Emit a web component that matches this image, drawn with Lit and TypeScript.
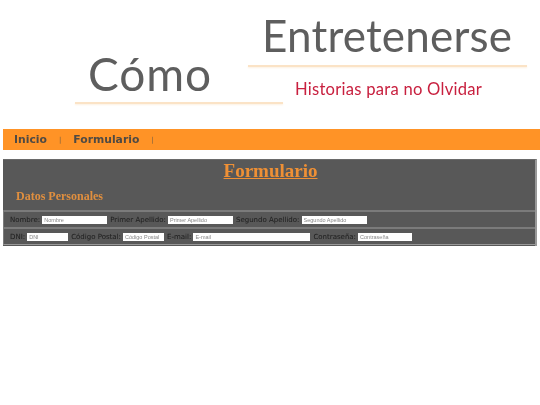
import { LitElement, html, css } from "lit";
import { customElement } from "lit/decorators.js";

@customElement("app-root")
export class AppRoot extends LitElement {
  static styles = css`
    :host { display: block; width: 540px; height: 405px; background: #fff; overflow: hidden; font-family: "DejaVu Sans", sans-serif; filter: blur(.3px); }
    .head { display: grid; grid-template-columns: 75px 173px 35px 244px; height: 129px; box-sizing: border-box; padding-top: 13px; }
    .brand { font-family: "Lato", "Open Sans", sans-serif; color: #5e5e5e; font-weight: 400; line-height: 1; }
    .ent { grid-column: 3 / 5; grid-row: 1; }
    .ent .brand { font-size: 44px; height: 50px; padding-left: 14px; letter-spacing: .2px; }
    .rule { height: 2px; background: #fbe3c6; box-shadow: 0 1px 2px #fdf0e0; }
    .ent .rule { margin-top: 2px; }
    .sub { font-family: "Lato", "Open Sans", sans-serif; color: #c8203f; font-size: 16.6px; letter-spacing: .25px; padding: 12px 0 0 47px; line-height: 20px; }
    .como { grid-column: 2 / 4; grid-row: 1; padding-top: 41px; }
    .como .brand { font-size: 46px; height: 48px; padding-left: 13px; letter-spacing: .9px; margin-top: -3px; padding-bottom: 3px; }
    nav { margin-left: 3px; height: 21px; background: #ff9326; display: flex; align-items: center; padding-left: 11px; color: #4f4a44; font-weight: bold; font-size: 10.8px; }
    nav i { font-style: normal; font-weight: normal; font-size: 7px; margin: 0 12px; color: #7a6040; }
    main { margin: 9px 3px 0; height: 87px; box-sizing: border-box; background: #585858; border-top: 1px solid #6a6a6a; border-right: 2px solid #999; display: flex; flex-direction: column; }
    h1 { margin: 0; padding-left: 3px; font: bold 19px/22px "Liberation Serif", serif; color: #ef9035; text-decoration: underline; text-align: center; height: 25px; }
    h2 { margin: 0; font: bold 12px/14px "Liberation Serif", serif; color: #e08f3f; padding: 4px 0 0 13px; height: 21px; box-sizing: content-box; }
    .row { display: flex; align-items: center; height: 15px; border-top: 2px solid #7b7b7b; border-left: 1px solid #7b7b7b; padding-left: 6px; font-size: 7px; color: #222; }
    .row:last-child { border-bottom: 1px solid #999; height: 15px; }
    .row label { white-space: nowrap; margin-right: 2.1px; -webkit-text-stroke: .05px #222; }
    input { box-sizing: border-box; height: 8px; border: 0; background: #fff; padding: 0 2px; margin: 0 3px 0 0; font: 5.5px "Liberation Sans", sans-serif; outline: none; }
    input::placeholder { color: #888; opacity: 1; }
  `;

  private field(label: string, ph: string, w: number) {
    return html`<label>${label}</label><input style="width:${w}px" placeholder=${ph} />`;
  }

  render() {
    return html`
      <header class="head">
        <div class="como"><div class="brand">Cómo</div><div class="rule"></div></div>
        <div class="ent">
          <div class="brand">Entretenerse</div>
          <div class="rule"></div>
          <div class="sub">Historias para no Olvidar</div>
        </div>
      </header>
      <nav>Inicio<i>|</i>Formulario<i>|</i></nav>
      <main>
        <h1>Formulario</h1>
        <h2>Datos Personales</h2>
        <div class="row">
          ${this.field("Nombre:", "Nombre", 65)}
          ${this.field("Primer Apellido:", "Primer Apellido", 65)}
          ${this.field("Segundo Apellido:", "Segundo Apellido", 65)}
        </div>
        <div class="row">
          ${this.field("DNI:", "DNI", 41)}
          ${this.field("Código Postal:", "Código Postal", 41)}
          ${this.field("E-mail:", "E-mail", 117)}
          ${this.field("Contraseña:", "Contraseña", 54)}
        </div>
      </main>
    `;
  }
}
